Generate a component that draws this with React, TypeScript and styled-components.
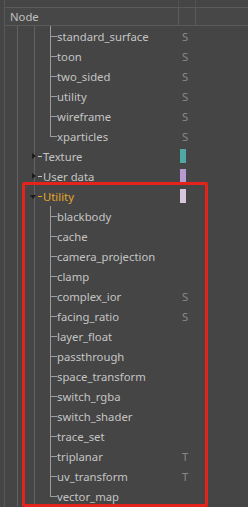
import React from "react";
import styled, { createGlobalStyle, css } from "styled-components";

const Global = createGlobalStyle`
  html, body { margin: 0; padding: 0; background: #454545; }
  body { font-family: "Noto Sans", "Open Sans", sans-serif; }
`;

const GUIDE = "#626262";
const CONN = "#9c9c9c";

const Panel = styled.div`
  position: relative;
  width: 248px;
  height: 507px;
  overflow: hidden;
  background: linear-gradient(#585858, #585858) 4px 0 / 1px 100% no-repeat, #454545;
  color: #c4c4c4;
  font-size: 11.3px;
`;

const TopStrip = styled.div`
  height: 7px;
  border-bottom: 1px solid #5a5a5a;
  margin-left: 5px;
  display: grid;
  grid-template-columns: 174px 17px 1fr;
`;

const HeaderBar = styled.div`
  height: 17px;
  border-bottom: 1px solid #5a5a5a;
  margin-left: 5px;
  display: grid;
  grid-template-columns: 174px 17px 1fr;
  background: #474747;
`;

const HeadCell = styled.div<{ $divider?: boolean }>`
  display: flex;
  align-items: center;
  padding-left: 5px;
  color: #c0c0c0;
  ${(p) => p.$divider && css`border-right: 1px solid #5a5a5a;`}
`;

const StripCell = styled.div<{ $divider?: boolean }>`
  ${(p) => p.$divider && css`border-right: 1px solid #525252;`}
`;

type Kind = "leaf" | "group";

const line = (c: string, x: number, y: number, w: number, h: string) =>
  `linear-gradient(${c}, ${c}) ${x}px ${y}px / ${w}px ${h} no-repeat`;

const Row = styled.div<{ $kind: Kind; $last?: boolean }>`
  height: 20px;
  display: grid;
  grid-template-columns: 180px 1fr;
  align-items: center;
  background: ${(p) => {
    const parts = [line(GUIDE, 17, 0, 1, "100%"), line(GUIDE, 34, 0, 1, "100%")];
    if (p.$kind === "leaf") {
      parts.push(line(CONN, 50, 0, 1, p.$last ? "11px" : "100%"));
      parts.push(line(CONN, 50, 10, 7, "1px"));
    }
    return parts.join(", ");
  }};
`;

const Label = styled.div<{ $kind: Kind; $active?: boolean }>`
  display: flex;
  align-items: center;
  height: 20px;
  padding-left: ${(p) => (p.$kind === "leaf" ? "57px" : "32px")};
  color: ${(p) => (p.$active ? "#e4a52c" : "#c4c4c4")};
  white-space: nowrap;
`;

const Arrow = styled.span<{ $open?: boolean }>`
  width: 0;
  height: 0;
  flex: none;
  ${(p) =>
    p.$open
      ? css`
          margin-left: -2px;
          margin-top: 2px;
          border-top: 4px solid #1c1c1c;
          border-left: 3px solid transparent;
          border-right: 3px solid transparent;
        `
      : css`
          border-left: 4px solid #1c1c1c;
          border-top: 3px solid transparent;
          border-bottom: 3px solid transparent;
        `}
`;

const Dash = styled.span`
  width: 4px;
  height: 1px;
  margin-left: 2px;
  margin-right: 1px;
  background: currentColor;
  flex: none;
`;

const Extra = styled.div`
  display: flex;
  align-items: center;
  height: 20px;
`;

const Flag = styled.span`
  padding-left: 2px;
  color: #888888;
`;

const Swatch = styled.span<{ $color: string }>`
  width: 6px;
  height: 14px;
  background: ${(p) => p.$color};
`;

const Highlight = styled.div`
  position: absolute;
  left: 22px;
  top: 182px;
  width: 186px;
  height: 325px;
  box-sizing: border-box;
  border: 3px solid #e3241d;
  border-radius: 2px;
  pointer-events: none;
`;

type Item = {
  name: string;
  kind: Kind;
  flag?: string;
  swatch?: string;
  last?: boolean;
  open?: boolean;
  active?: boolean;
};

const items: Item[] = [
  { name: "standard_surface", kind: "leaf", flag: "S" },
  { name: "toon", kind: "leaf", flag: "S" },
  { name: "two_sided", kind: "leaf", flag: "S" },
  { name: "utility", kind: "leaf", flag: "S" },
  { name: "wireframe", kind: "leaf", flag: "S" },
  { name: "xparticles", kind: "leaf", flag: "S", last: true },
  { name: "Texture", kind: "group", swatch: "#4ea8a3" },
  { name: "User data", kind: "group", swatch: "#b79ad2" },
  { name: "Utility", kind: "group", swatch: "#d8c6dc", open: true, active: true },
  { name: "blackbody", kind: "leaf" },
  { name: "cache", kind: "leaf" },
  { name: "camera_projection", kind: "leaf" },
  { name: "clamp", kind: "leaf" },
  { name: "complex_ior", kind: "leaf", flag: "S" },
  { name: "facing_ratio", kind: "leaf", flag: "S" },
  { name: "layer_float", kind: "leaf" },
  { name: "passthrough", kind: "leaf" },
  { name: "space_transform", kind: "leaf" },
  { name: "switch_rgba", kind: "leaf" },
  { name: "switch_shader", kind: "leaf" },
  { name: "trace_set", kind: "leaf" },
  { name: "triplanar", kind: "leaf", flag: "T" },
  { name: "uv_transform", kind: "leaf", flag: "T" },
  { name: "vector_map", kind: "leaf", last: true },
];

export default function App() {
  return (
    <Panel>
      <Global />
      <TopStrip>
        <StripCell $divider />
        <StripCell $divider />
        <StripCell />
      </TopStrip>
      <HeaderBar>
        <HeadCell $divider>Node</HeadCell>
        <HeadCell $divider />
        <HeadCell />
      </HeaderBar>
      {items.map((it) => (
        <Row key={it.name} $kind={it.kind} $last={it.last}>
          <Label $kind={it.kind} $active={it.active}>
            {it.kind === "group" && (
              <>
                <Arrow $open={it.open} />
                <Dash />
              </>
            )}
            {it.name}
          </Label>
          <Extra>
            {it.flag && <Flag>{it.flag}</Flag>}
            {it.swatch && <Swatch $color={it.swatch} />}
          </Extra>
        </Row>
      ))}
      <Highlight />
    </Panel>
  );
}
